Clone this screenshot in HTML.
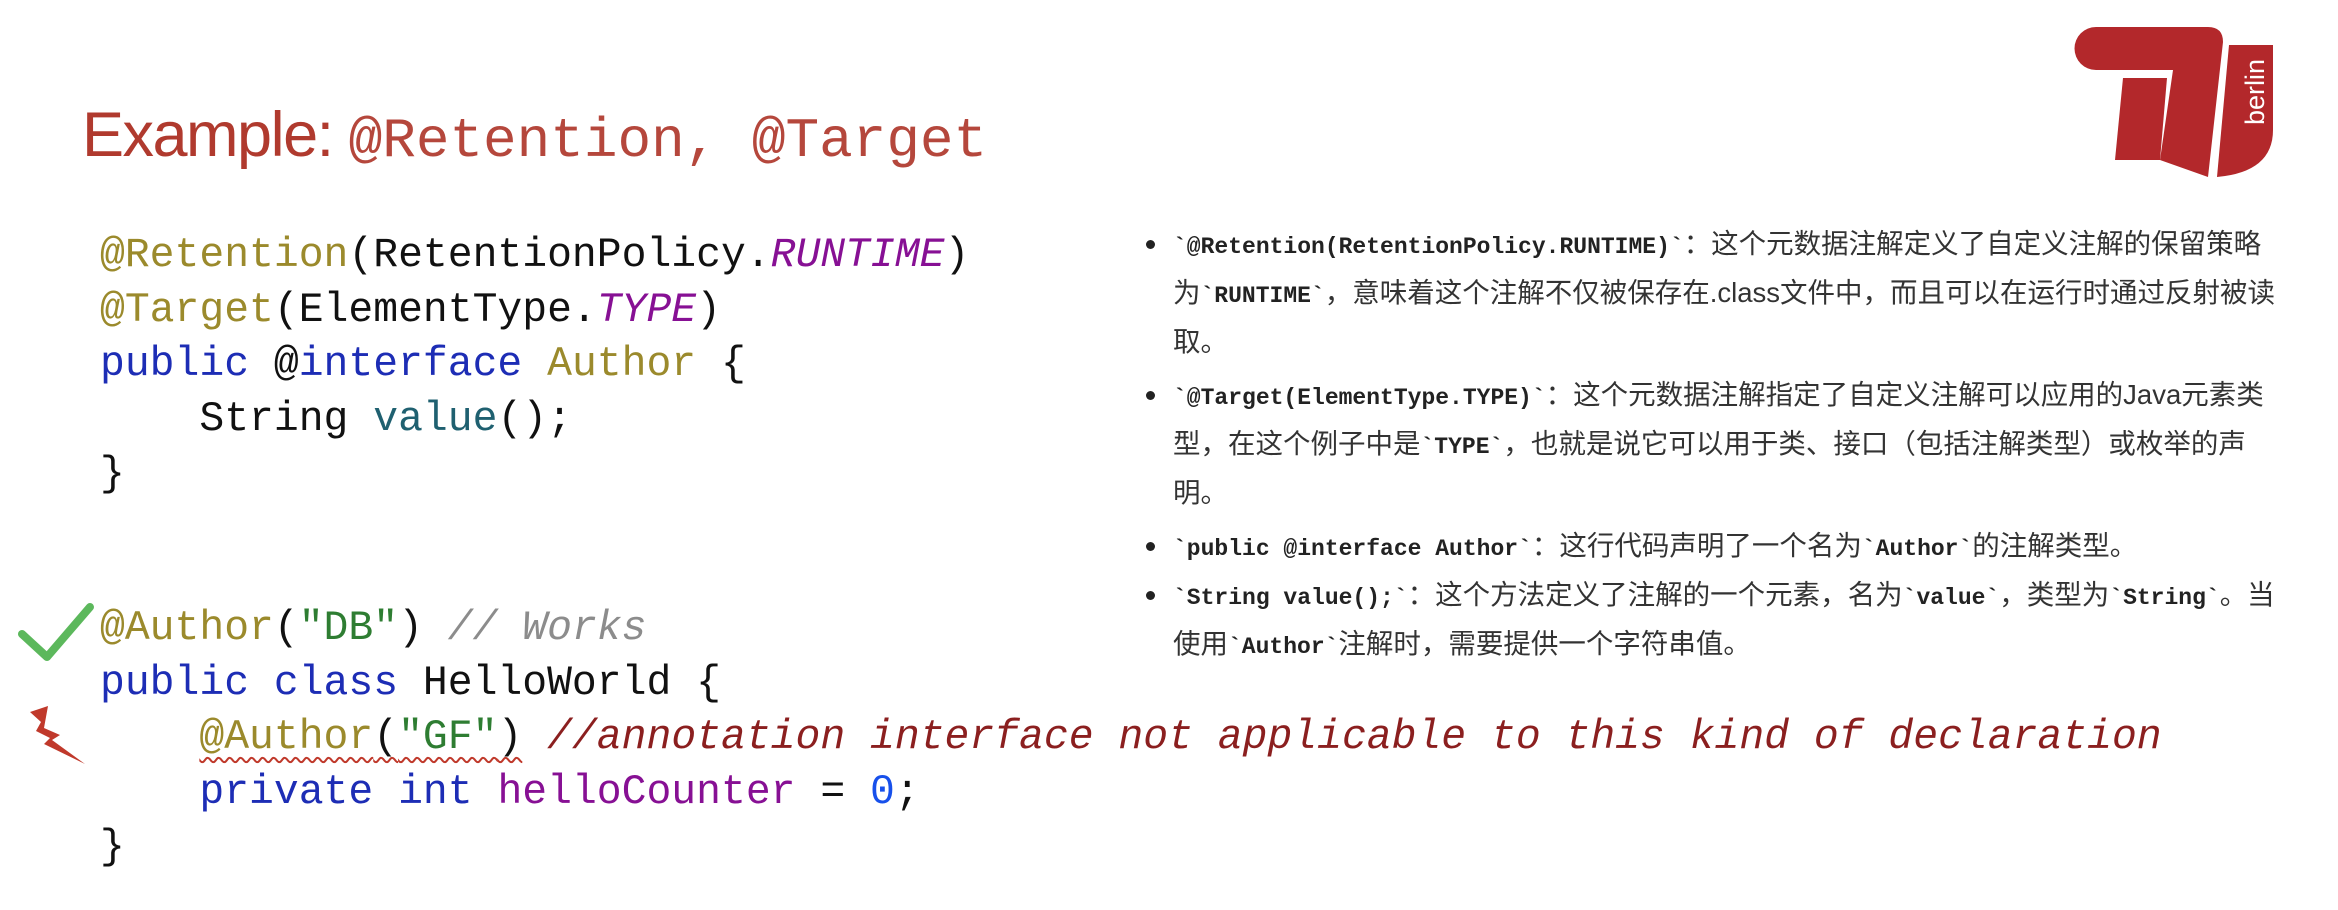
<!DOCTYPE html>
<html><head><meta charset="utf-8"><style>
html,body{margin:0;padding:0;background:#fff;width:2338px;height:910px;overflow:hidden;position:relative}
.t{position:absolute;left:82px;top:100px;white-space:nowrap;color:#b03a2e;line-height:70px}
.t .s{font-family:"Liberation Sans",sans-serif;font-size:63px;letter-spacing:-1.5px}
.t .m{font-family:"Liberation Mono",monospace;font-size:56px;color:#b5473c}
.code{position:absolute;left:100px;font-family:"Liberation Mono",monospace;font-size:41.4px;line-height:54.7px;white-space:pre;color:#111}
.an{color:#9b8a2c}.kw{color:#1d2db5}.pu{color:#871094;font-style:italic}.pv{color:#871094}.te{color:#1f6070}.st{color:#2e7d32}.cm{color:#8c8c8c;font-style:italic}.rc{color:#8b1f1f;font-style:italic}.nu{color:#1750eb}
.sq{text-decoration:underline wavy #c0392b;text-decoration-thickness:2px;text-underline-offset:8px}
.r{position:absolute;left:1144px;top:219px;font-family:"Liberation Sans","Noto Sans CJK SC",sans-serif;font-size:27.5px;color:#333;white-space:nowrap}
.r .b{position:relative;padding-left:29px}
.r .ln{height:49px;line-height:49px;overflow:visible}
.r .b:before{content:"";position:absolute;left:2px;top:21px;width:9px;height:9px;border-radius:50%;background:#222}
.r code{font-family:"Liberation Mono",monospace;font-weight:bold;font-size:23px;color:#222;line-height:1}
.r .gap{height:4px}
</style></head><body>
<div class="t"><span class="s">Example: </span><span class="m">@Retention, @Target</span></div>

<div class="code" style="top:229px"><span class="an">@Retention</span>(RetentionPolicy.<span class="pu">RUNTIME</span>)
<span class="an">@Target</span>(ElementType.<span class="pu">TYPE</span>)
<span class="kw">public</span> @<span class="kw">interface</span> <span class="an">Author</span> {
    String <span class="te">value</span>();
}</div>

<div class="code" style="top:602px"><span class="an">@Author</span>(<span class="st">"DB"</span>) <span class="cm">// Works</span>
<span class="kw">public class</span> HelloWorld {
    <span class="sq"><span class="an">@Author</span>(<span class="st">"GF"</span>)</span> <span class="rc">//annotation interface not applicable to this kind of declaration</span>
    <span class="kw">private int</span> <span class="pv">helloCounter</span> = <span class="nu">0</span>;
}</div>

<svg style="position:absolute;left:0;top:590px" width="100" height="190" viewBox="0 590 100 190">
<polyline points="22,634 47,657 90,607" fill="none" stroke="#5cb85c" stroke-width="8" stroke-linecap="round" stroke-linejoin="round"/>
<polygon points="30,712 48,706 44,728 60,735 52,740 85,764 44,744 50,738 36,731 41,722" fill="#c0392b"/>
</svg>

<div class="r">
<div class="b"><div class="ln"><code>`@Retention(RetentionPolicy.RUNTIME)`</code>：这个元数据注解定义了自定义注解的保留策略</div><div class="ln">为<code>`RUNTIME`</code>，意味着这个注解不仅被保存在.class文件中，而且可以在运行时通过反射被读</div><div class="ln">取。</div></div>
<div class="gap"></div>
<div class="b"><div class="ln"><code>`@Target(ElementType.TYPE)`</code>：这个元数据注解指定了自定义注解可以应用的Java元素类</div><div class="ln">型，在这个例子中是<code>`TYPE`</code>，也就是说它可以用于类、接口（包括注解类型）或枚举的声</div><div class="ln">明。</div></div>
<div class="gap"></div>
<div class="b"><div class="ln"><code>`public @interface Author`</code>：这行代码声明了一个名为<code>`Author`</code>的注解类型。</div></div>
<div class="b"><div class="ln"><code>`String value();`</code>：这个方法定义了注解的一个元素，名为<code>`value`</code>，类型为<code>`String`</code>。当</div><div class="ln">使用<code>`Author`</code>注解时，需要提供一个字符串值。</div></div>
</div>

<svg style="position:absolute;left:2060px;top:20px" width="240" height="170" viewBox="0 0 240 170">
<path d="M36,7 H148 Q163,7 163,22 L148,157 L100,140 L113,50 H36 A21.5,21.5 0 0 1 36,7 Z" fill="#b3282b"/>
<polygon points="63,58 107,58 100,140 55,140" fill="#b3282b"/>
<path d="M169,25 H213 V110 Q213,152 157,157 Z" fill="#b3282b"/>
<text x="0" y="0" transform="translate(204,72) rotate(-90)" text-anchor="middle" font-family="Liberation Sans,sans-serif" font-size="27" fill="#fff">berlin</text>
</svg>
</body></html>
